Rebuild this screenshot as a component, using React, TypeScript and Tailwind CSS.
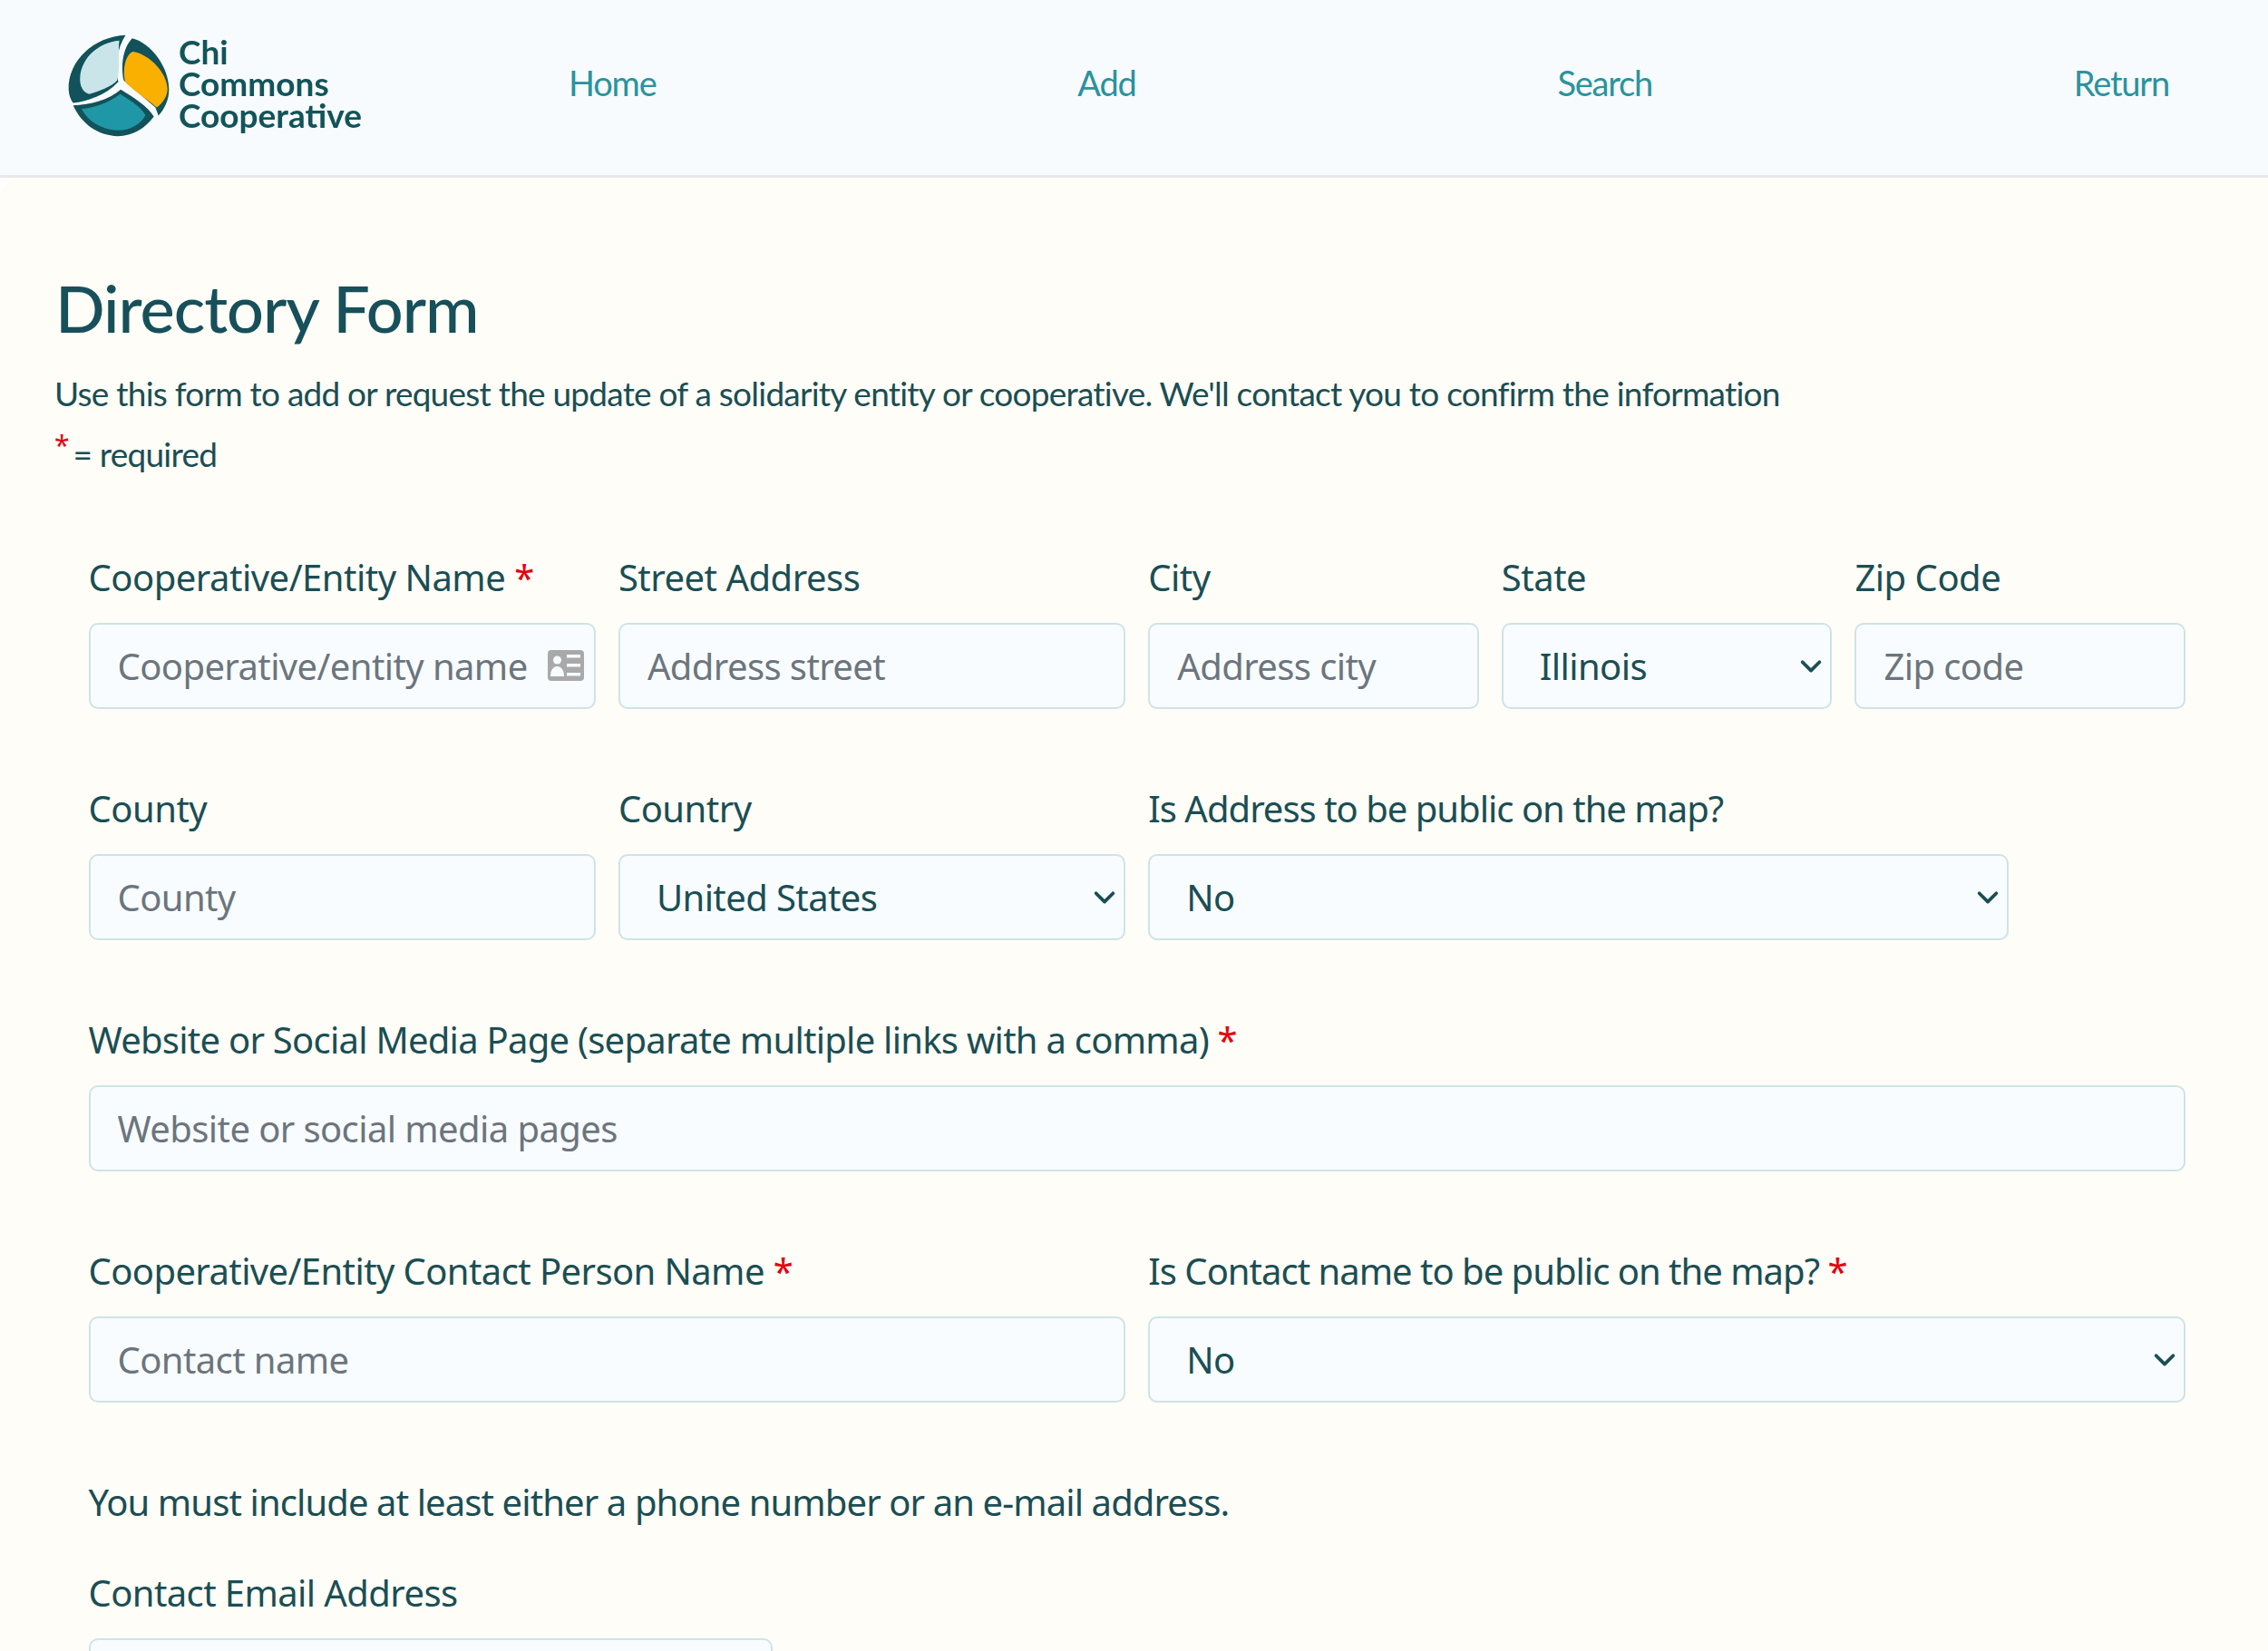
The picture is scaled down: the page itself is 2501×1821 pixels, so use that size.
const labelCls = "block h-[60px] mb-5 text-[40px] leading-[60px] text-[#1a4e54] whitespace-nowrap";
const boxCls =
  "block w-full h-[95px] rounded-[10px] border-[2.5px] border-[#cfe3e6] bg-[#f8fcff] text-[40px] text-[#1a4e54] outline-none tracking-[-0.6px]";

function Star() {
  return <span className="text-[#e3000f]"> *</span>;
}

function Field({ label, required, placeholder, icon, tracking = "tracking-[-0.5px]" }: { label: string; required?: boolean; placeholder: string; icon?: boolean; tracking?: string }) {
  return (
    <div className="relative">
      <label className={labelCls + " " + tracking}>
        {label}
        {required && <Star />}
      </label>
      <input placeholder={placeholder} className={boxCls + " px-[30px] placeholder:text-[#6c757d]"} />
      {icon && (
        <svg viewBox="0 0 40 34" className="absolute right-[13px] top-[110px] w-10 h-[34px]">
          <rect width="40" height="34" rx="4" fill="#a9a9a9" />
          <circle cx="10.5" cy="11" r="4.5" fill="#f8fcff" />
          <path d="M3 29c0-7 3-11 7.500-11S18 22 18 29z" fill="#f8fcff" />
          <path d="M21 5h15v3.500H21zM21 15h15v3.500H21zM21 25h15v3.500H21z" fill="#f8fcff" />
        </svg>
      )}
    </div>
  );
}

function SelectField({ label, required, value, options, tracking = "tracking-[-0.5px]" }: { label: string; required?: boolean; value: string; options: string[]; tracking?: string }) {
  return (
    <div className="relative">
      <label className={labelCls + " " + tracking}>
        {label}
        {required && <Star />}
      </label>
      <select defaultValue={value} className={boxCls + " appearance-none pl-[40px] pr-[60px]"}>
        {options.map((o) => (
          <option key={o}>{o}</option>
        ))}
      </select>
      <svg viewBox="0 0 16 16" className="absolute right-[8.500px] top-[112px] w-[30px] h-[30px]" fill="none" stroke="#1a4e54" strokeWidth="2" strokeLinecap="round" strokeLinejoin="round">
        <path d="m3 6 5 5 5-5" />
      </svg>
    </div>
  );
}

function LogoMark() {
  return (
    <svg viewBox="105 80 337 342" className="w-[112px] h-[114px] shrink-0 blur-[0.5px]">
      <path d="M296 85C190 90 105 170 107 265c1 20 8 35 15 45 48-5 108-25 150-70-12-45-6-110 24-155z" fill="#12525a" />
      <path d="M275 103c-70 7-125 57-130 122-2 30 10 50 30 55 35-10 75-25 93-45 12-45 2-95 7-132z" fill="#c9e5e9" />
      <path d="M318 95c62 15 122 95 122 170 0 35-15 65-35 87l-10-27L290 235c-10-45-5-105 28-140z" fill="#12525a" />
      <path d="M320 140c45 5 110 60 115 120 2 25-15 50-35 65-30-25-90-65-105-85-10-40 0-90 25-100z" fill="#f9b000" />
      <path d="M122 318c58-3 118-18 158-53 40 25 90 55 110 90-30 40-70 65-120 65-65-2-120-40-148-102z" fill="#12525a" />
      <path d="M150 330c40-5 90-20 128-50 32 20 67 40 84 70-17 35-62 55-102 50-45-5-85-25-110-70z" fill="#1f97a6" />
    </svg>
  );
}

export default function App() {
  return (
    <div className="h-screen overflow-hidden bg-white font-['Noto_Sans',sans-serif]">
      <header className="h-[196px] flex items-center pl-[75px] pr-[109px] pb-[6px] bg-[#f8fbfd] border-b-[3px] border-[#e8e8e8]">
        <LogoMark />
        <div className="ml-[10px] mb-[5px] w-[220px] text-[37px] leading-[35px] font-bold text-[#12545a] blur-[0.5px] font-['Lato',sans-serif]">
          <div>Chi</div>
          <div>Commons</div>
          <div>Cooperative</div>
        </div>
        <nav className="flex-1 flex justify-between ml-[210px] mb-[4px] text-[38px] tracking-[-1.2px] text-[#2a939d] font-['Lato',sans-serif]">
          <a>Home</a>
          <a>Add</a>
          <a>Search</a>
          <a>Return</a>
        </nav>
      </header>
      <main className="h-full bg-[#fffdf7] rounded-tl-[24px] pt-[98px] text-[#1a4e54]">
        <h2 className="pl-[61px] text-[72px] leading-[90px] font-medium tracking-[-1px] text-[#17505a] font-['Lato',sans-serif]">Directory Form</h2>
        <p className="pl-[60px] mt-[22px] text-[37px] leading-[56px] tracking-[-0.77px] font-['Lato',sans-serif]">
          Use this form to add or request the update of a solidarity entity or cooperative. We'll contact you to confirm the information
        </p>
        <p className="pl-[60px] mt-[11px] h-[56px] text-[37px] leading-[56px] tracking-[-0.77px] font-['Lato',sans-serif]">
          <span className="text-[#e3000f] text-[30px] mr-[-4px] align-super leading-none font-['Noto_Sans',sans-serif]">*</span> = required
        </p>
        <form className="pl-[97.5px] pr-[91px] mt-[78px]">
          <div className="grid grid-cols-12 gap-x-[25px] gap-y-20">
            <div className="col-span-3">
              <Field label="Cooperative/Entity Name" required placeholder="Cooperative/entity name" icon />
            </div>
            <div className="col-span-3">
              <Field label="Street Address" placeholder="Address street" />
            </div>
            <div className="col-span-2">
              <Field label="City" placeholder="Address city" />
            </div>
            <div className="col-span-2">
              <SelectField label="State" value="Illinois" options={["Illinois"]} />
            </div>
            <div className="col-span-2">
              <Field label="Zip Code" placeholder="Zip code" />
            </div>

            <div className="col-span-3">
              <Field label="County" placeholder="County" />
            </div>
            <div className="col-span-3">
              <SelectField label="Country" value="United States" options={["United States"]} />
            </div>
            <div className="col-span-5">
              <SelectField label="Is Address to be public on the map?" tracking="tracking-[-1px]" value="No" options={["No", "Yes"]} />
            </div>
            <div className="col-span-1" />

            <div className="col-span-12">
              <Field label="Website or Social Media Page (separate multiple links with a comma)" tracking="tracking-[-0.75px]" required placeholder="Website or social media pages" />
            </div>

            <div className="col-span-6">
              <Field label="Cooperative/Entity Contact Person Name" tracking="tracking-[-0.6px]" required placeholder="Contact name" />
            </div>
            <div className="col-span-6">
              <SelectField label="Is Contact name to be public on the map?" tracking="tracking-[-1px]" required value="No" options={["No", "Yes"]} />
            </div>
          </div>
          <p className="mt-[80px] text-[40px] leading-[60px] tracking-[-0.9px]">You must include at least either a phone number or an e-mail address.</p>
          <div className="grid grid-cols-12 gap-x-[25px] mt-[40px]">
            <div className="col-span-4">
              <Field label="Contact Email Address" tracking="tracking-[-0.6px]" placeholder="Contact email" />
            </div>
          </div>
        </form>
      </main>
    </div>
  );
}
